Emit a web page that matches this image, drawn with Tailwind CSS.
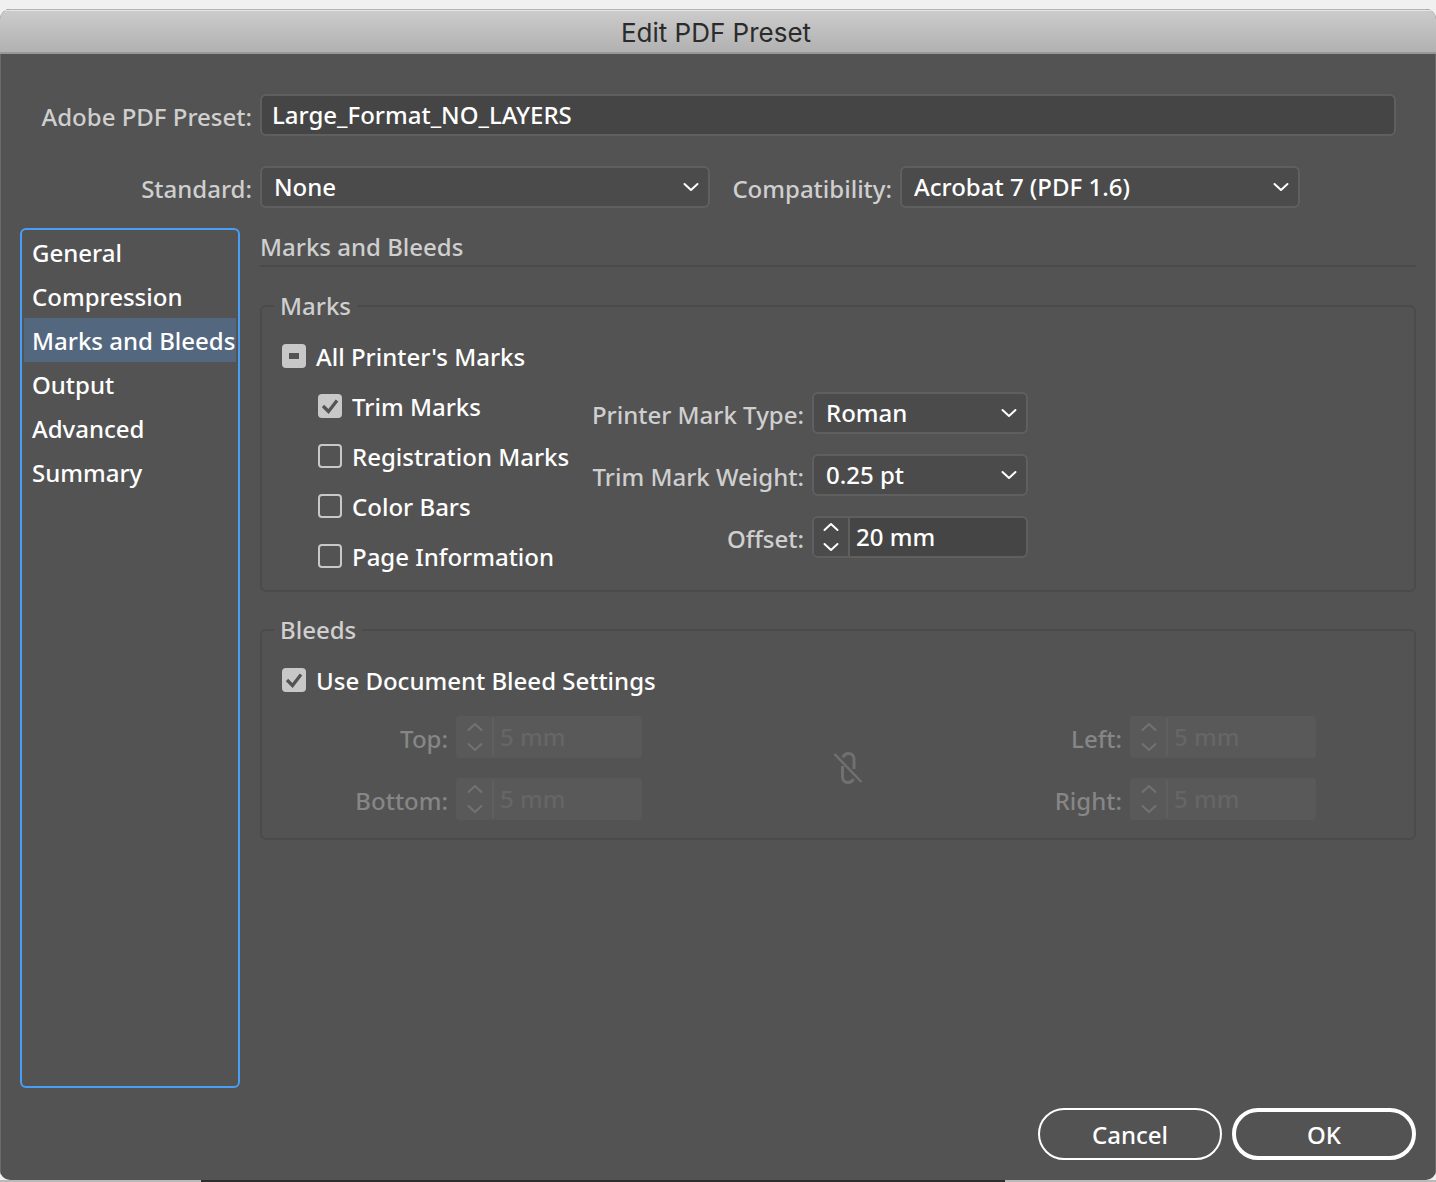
<!DOCTYPE html>
<html lang="en">
  <head>
    <meta charset="UTF-8" />
    <meta name="viewport" content="width=device-width, initial-scale=1.0" />
    <title>Edit PDF Preset</title>
    <script src="https://cdn.jsdelivr.net/npm/@tailwindcss/browser@4"></script>
  </head>
  <body class="bg-[#f0f0f0]">
    <svg class="hidden">
      <symbol id="down" viewBox="0 0 16 10">
        <path d="M1.5 2 L8 8 L14.5 2" fill="none" stroke="currentColor" stroke-width="2" stroke-linecap="round" stroke-linejoin="round" />
      </symbol>
      <symbol id="up" viewBox="0 0 16 10">
        <path d="M1.5 8 L8 2 L14.5 8" fill="none" stroke="currentColor" stroke-width="2" stroke-linecap="round" stroke-linejoin="round" />
      </symbol>
      <symbol id="check" viewBox="0 0 24 24">
        <path d="M5 12 L10.5 17.5 L19 6.5" fill="none" stroke="#535353" stroke-width="3.2" />
      </symbol>
    </svg>

    <div class="flex min-h-screen flex-col pt-[9px] font-['Noto_Sans','Liberation_Sans',sans-serif] text-[24px] leading-7 font-medium text-white">
      <div class="flex grow flex-col overflow-hidden rounded-[10px] bg-[#535353]">
        <header class="flex h-[45px] items-center justify-center border-t border-b-2 border-t-[#b4b4b4] border-b-[#989898] bg-linear-to-b from-[#cccccc] to-[#b1b1b1] pt-1 pr-1 shadow-[inset_0_1px_0_#e4e4e4]">
          <h1 class="font-['Inter','Liberation_Sans',sans-serif] text-[26px] font-normal text-[#2b2b2b]">Edit PDF Preset</h1>
        </header>

        <form class="flex grow flex-col border-x border-[#6a6a6a] px-[19px] pt-10 pb-5">
          <div class="flex items-center gap-2 pr-5">
            <label for="preset" class="w-[232px] shrink-0 pt-1 text-right text-[#cfcfcf]">Adobe PDF Preset:</label>
            <input id="preset" type="text" value="Large_Format_NO_LAYERS" class="h-[42px] min-w-0 grow rounded-md border-2 border-[#5f5f5f] bg-[#454545] px-2.5 pb-0.5 outline-none" />
          </div>

          <div class="mt-[30px] flex items-center gap-2 pr-[116px]">
            <label for="standard" class="w-[232px] shrink-0 pt-1 text-right text-[#cfcfcf]">Standard:</label>
            <div class="relative flex-[9]">
              <select id="standard" class="h-[42px] w-full appearance-none rounded-md border-2 border-[#5f5f5f] bg-[#4b4b4b] px-3 outline-none">
                <option>None</option>
              </select>
              <svg class="pointer-events-none absolute top-4 right-[11px] h-2.5 w-4"><use href="#down" /></svg>
            </div>
            <label for="compat" class="ml-3 w-[162px] shrink-0 pt-1 text-right text-[#cfcfcf]">Compatibility:</label>
            <div class="relative flex-[8]">
              <select id="compat" class="h-[42px] w-full appearance-none rounded-md border-2 border-[#5f5f5f] bg-[#4b4b4b] px-3 outline-none">
                <option>Acrobat 7 (PDF 1.6)</option>
              </select>
              <svg class="pointer-events-none absolute top-4 right-[11px] h-2.5 w-4"><use href="#down" /></svg>
            </div>
          </div>

          <div class="mt-5 flex grow gap-5">
            <nav class="flex w-[220px] shrink-0 flex-col rounded-md border-2 border-[#469ff5] px-0.5">
              <button type="button" class="h-11 pt-0.5 pl-2 text-left whitespace-nowrap">General</button>
              <button type="button" class="h-11 pt-0.5 pl-2 text-left whitespace-nowrap">Compression</button>
              <button type="button" class="h-11 bg-[#53677f] pt-0.5 pl-2 text-left whitespace-nowrap">Marks and Bleeds</button>
              <button type="button" class="h-11 pt-0.5 pl-2 text-left whitespace-nowrap">Output</button>
              <button type="button" class="h-11 pt-0.5 pl-2 text-left whitespace-nowrap">Advanced</button>
              <button type="button" class="h-11 pt-0.5 pl-2 text-left whitespace-nowrap">Summary</button>
            </nav>

            <main class="min-w-0 grow">
              <h2 class="border-b-2 border-[#4a4a4a] pt-[5px] pb-1 text-[#cfcfcf]">Marks and Bleeds</h2>

              <!-- Marks -->
              <fieldset class="mt-6 rounded-md border-2 border-[#4b4b4b] pb-[9px] pl-5">
                <legend class="-ml-2 px-1.5 pt-px text-[#cfcfcf]">Marks</legend>
                <label class="mt-[11px] flex h-[50px] items-center gap-2.5">
                  <span class="grid">
                    <input type="checkbox" class="col-start-1 row-start-1 size-6 appearance-none rounded-sm bg-[#c8c8c8]" />
                    <span class="pointer-events-none col-start-1 row-start-1 h-1.5 w-2.5 place-self-center bg-[#535353]"></span>
                  </span>
                  <span class="pt-0.5">All Printer's Marks</span>
                </label>
                <div class="flex">
                  <div class="w-[308px] shrink-0 pl-9 whitespace-nowrap">
                    <label class="flex h-[50px] items-center gap-2.5">
                      <span class="grid">
                        <input type="checkbox" checked class="col-start-1 row-start-1 size-6 appearance-none rounded-sm bg-[#c8c8c8]" />
                        <svg class="pointer-events-none col-start-1 row-start-1 size-6"><use href="#check" /></svg>
                      </span>
                      <span class="pt-0.5">Trim Marks</span>
                    </label>
                    <label class="flex h-[50px] items-center gap-2.5">
                      <input type="checkbox" class="size-6 appearance-none rounded-sm border-2 border-[#c8c8c8]" />
                      <span class="pt-0.5">Registration Marks</span>
                    </label>
                    <label class="flex h-[50px] items-center gap-2.5">
                      <input type="checkbox" class="size-6 appearance-none rounded-sm border-2 border-[#c8c8c8]" />
                      <span class="pt-0.5">Color Bars</span>
                    </label>
                    <label class="flex h-[50px] items-center gap-2.5">
                      <input type="checkbox" class="size-6 appearance-none rounded-sm border-2 border-[#c8c8c8]" />
                      <span class="pt-0.5">Page Information</span>
                    </label>
                  </div>

                  <div class="grid grid-cols-[214px_216px] content-start items-center gap-x-2 gap-y-5 pt-[11px] whitespace-nowrap">
                    <label for="marktype" class="justify-self-end pt-1 text-[#cfcfcf]">Printer Mark Type:</label>
                    <div class="relative">
                      <select id="marktype" class="h-[42px] w-full appearance-none rounded-md border-2 border-[#5f5f5f] bg-[#4b4b4b] px-3 outline-none">
                        <option>Roman</option>
                      </select>
                      <svg class="pointer-events-none absolute top-4 right-[11px] h-2.5 w-4"><use href="#down" /></svg>
                    </div>
                    <label for="weight" class="justify-self-end pt-1 text-[#cfcfcf]">Trim Mark Weight:</label>
                    <div class="relative">
                      <select id="weight" class="h-[42px] w-full appearance-none rounded-md border-2 border-[#5f5f5f] bg-[#4b4b4b] px-3 outline-none">
                        <option>0.25 pt</option>
                      </select>
                      <svg class="pointer-events-none absolute top-4 right-[11px] h-2.5 w-4"><use href="#down" /></svg>
                    </div>
                    <label for="offset" class="justify-self-end pt-1 text-[#cfcfcf]">Offset:</label>
                    <div class="flex h-[42px] overflow-hidden rounded-md border-2 border-[#5f5f5f] bg-[#454545]">
                      <div class="flex w-9 shrink-0 flex-col items-center justify-between border-r-2 border-[#5f5f5f] bg-[#4b4b4b] py-1">
                        <button type="button" aria-label="Increase offset"><svg class="h-2.5 w-4"><use href="#up" /></svg></button>
                        <button type="button" aria-label="Decrease offset"><svg class="h-2.5 w-4"><use href="#down" /></svg></button>
                      </div>
                      <input id="offset" type="text" value="20 mm" class="min-w-0 grow pl-1.5 outline-none" />
                    </div>
                  </div>
                </div>
              </fieldset>

              <!-- Bleeds -->
              <fieldset class="mt-[23px] rounded-md border-2 border-[#4b4b4b] pb-[18px] pl-5">
                <legend class="-ml-2 px-1.5 pt-px text-[#cfcfcf]">Bleeds</legend>
                <label class="mt-[11px] flex h-[50px] items-center gap-2.5">
                  <span class="grid">
                    <input type="checkbox" checked class="col-start-1 row-start-1 size-6 appearance-none rounded-sm bg-[#c8c8c8]" />
                    <svg class="pointer-events-none col-start-1 row-start-1 size-6"><use href="#check" /></svg>
                  </span>
                  <span class="pt-0.5">Use Document Bleed Settings</span>
                </label>
                <div class="mt-[11px] flex items-center justify-between pr-[98px] text-[#868686]">
                  <div class="grid grid-cols-[166px_186px] items-center gap-x-2 gap-y-5">
                    <label for="top" class="justify-self-end pt-1">Top:</label>
                    <div class="flex h-[42px] rounded-sm bg-[#595959] py-0.5 pl-0.5">
                      <div class="flex w-9 shrink-0 flex-col items-center justify-between border-r-2 border-[#5f5f5f] py-1 text-[#727272]">
                        <button type="button" disabled aria-label="Increase top"><svg class="h-2.5 w-4"><use href="#up" /></svg></button>
                        <button type="button" disabled aria-label="Decrease top"><svg class="h-2.5 w-4"><use href="#down" /></svg></button>
                      </div>
                      <input id="top" type="text" value="5 mm" disabled class="min-w-0 grow pl-1.5 text-[#666666]" />
                    </div>
                    <label for="bottom" class="justify-self-end pt-1">Bottom:</label>
                    <div class="flex h-[42px] rounded-sm bg-[#595959] py-0.5 pl-0.5">
                      <div class="flex w-9 shrink-0 flex-col items-center justify-between border-r-2 border-[#5f5f5f] py-1 text-[#727272]">
                        <button type="button" disabled aria-label="Increase bottom"><svg class="h-2.5 w-4"><use href="#up" /></svg></button>
                        <button type="button" disabled aria-label="Decrease bottom"><svg class="h-2.5 w-4"><use href="#down" /></svg></button>
                      </div>
                      <input id="bottom" type="text" value="5 mm" disabled class="min-w-0 grow pl-1.5 text-[#666666]" />
                    </div>
                  </div>

                  <button type="button" disabled aria-label="Link bleed values">
                    <svg class="h-9 w-8" viewBox="0 0 32 36" fill="none" stroke="#707070" stroke-width="3">
                      <path d="M2.5 4 L29.5 32" stroke-width="2.5" />
                      <path d="M11 7.5 C12 4.5 14 3.5 16.5 3.5 C20 3.5 22 6 22 9 V19" />
                      <path d="M10.5 16 V27 C10.5 30.5 13 32.5 16 32.5 C18.5 32.5 20.5 31 21.5 29" />
                    </svg>
                  </button>

                  <div class="grid grid-cols-[auto_186px] items-center gap-x-2 gap-y-5">
                    <label for="left" class="justify-self-end pt-1">Left:</label>
                    <div class="flex h-[42px] rounded-sm bg-[#595959] py-0.5 pl-0.5">
                      <div class="flex w-9 shrink-0 flex-col items-center justify-between border-r-2 border-[#5f5f5f] py-1 text-[#727272]">
                        <button type="button" disabled aria-label="Increase left"><svg class="h-2.5 w-4"><use href="#up" /></svg></button>
                        <button type="button" disabled aria-label="Decrease left"><svg class="h-2.5 w-4"><use href="#down" /></svg></button>
                      </div>
                      <input id="left" type="text" value="5 mm" disabled class="min-w-0 grow pl-1.5 text-[#666666]" />
                    </div>
                    <label for="right" class="justify-self-end pt-1">Right:</label>
                    <div class="flex h-[42px] rounded-sm bg-[#595959] py-0.5 pl-0.5">
                      <div class="flex w-9 shrink-0 flex-col items-center justify-between border-r-2 border-[#5f5f5f] py-1 text-[#727272]">
                        <button type="button" disabled aria-label="Increase right"><svg class="h-2.5 w-4"><use href="#up" /></svg></button>
                        <button type="button" disabled aria-label="Decrease right"><svg class="h-2.5 w-4"><use href="#down" /></svg></button>
                      </div>
                      <input id="right" type="text" value="5 mm" disabled class="min-w-0 grow pl-1.5 text-[#666666]" />
                    </div>
                  </div>
                </div>
              </fieldset>
            </main>
          </div>

          <div class="mt-5 flex justify-end gap-2.5">
            <button type="button" class="h-[52px] w-[184px] rounded-full border-2 border-white pt-0.5">Cancel</button>
            <button type="button" class="h-[52px] w-[184px] rounded-full border-4 border-white pt-0.5">OK</button>
          </div>
        </form>
      </div>
      <!-- edge of the window behind -->
      <div class="flex h-0.5 bg-[#b9b9b9]">
        <div class="ml-[14%] w-[56%] bg-[#2e2e2e]"></div>
      </div>
    </div>
  </body>
</html>
